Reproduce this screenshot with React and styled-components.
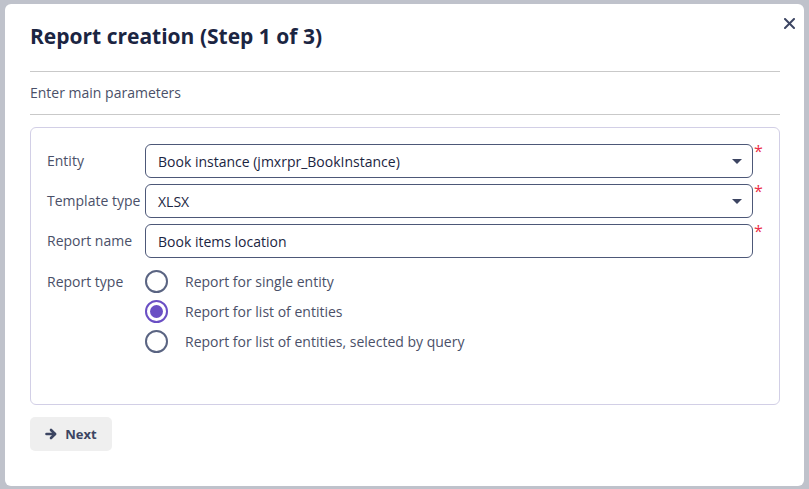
import React from 'react';
import styled, { createGlobalStyle } from 'styled-components';

const GlobalStyle = createGlobalStyle`
  html, body {
    margin: 0;
    height: 100%;
  }
  body {
    background: #bfc2cb;
    font-family: "Open Sans", "Noto Sans", sans-serif;
    padding: 4px 5px 3px 5px;
    box-sizing: border-box;
  }
  #root {
    height: 100%;
  }
`;

const Dialog = styled.div`
  position: relative;
  box-sizing: border-box;
  height: 100%;
  background: #fff;
  border-radius: 6px;
  padding: 17px 24px 0 25px;
  display: flex;
  flex-direction: column;
`;

const CloseButton = styled.button`
  position: absolute;
  top: 10px;
  right: 6px;
  width: 18px;
  height: 18px;
  border: none;
  background: none;
  padding: 0;
  display: flex;
  align-items: center;
  justify-content: center;
  color: #3c4562;
  cursor: pointer;
`;

const Title = styled.h1`
  margin: 0;
  font-size: 21px;
  line-height: 30px;
  font-weight: 700;
  color: #1b2542;
  padding-bottom: 20px;
  border-bottom: 1px solid #c9c9c9;
`;

const Subtitle = styled.div`
  font-size: 14px;
  line-height: 20px;
  color: #4a5068;
  padding: 11px 0 11px;
  border-bottom: 1px solid #c9c9c9;
`;

const Panel = styled.div`
  margin-top: 12px;
  height: 278px;
  box-sizing: border-box;
  border: 1px solid #d2cfe6;
  border-radius: 6px;
  padding: 16px 0 0 16px;
  display: flex;
  flex-direction: column;
  gap: 6px;
`;

const Row = styled.div`
  display: grid;
  grid-template-columns: 98px 608px 20px;
  align-items: ${(p) => (p.$top ? 'start' : 'center')};
  margin-top: ${(p) => (p.$top ? '8px' : '0')};
`;

const Label = styled.div`
  font-size: 14px;
  line-height: 20px;
  color: #4a5068;
`;

const Field = styled.div`
  box-sizing: border-box;
  height: 34px;
  border: 1px solid #4d5878;
  border-radius: 6px;
  padding: 0 12px;
  display: flex;
  align-items: center;
  justify-content: space-between;
  font-size: 14px;
  color: #1b2542;
`;

const Caret = styled.span`
  width: 0;
  height: 0;
  border-left: 5px solid transparent;
  border-right: 5px solid transparent;
  border-top: 5px solid #3c4562;
  margin-right: -2px;
`;

const Required = styled.span`
  align-self: start;
  color: #ec2d45;
  font-size: 16px;
  line-height: 16px;
  padding-left: 1px;
  margin-top: -1px;
`;

const RadioList = styled.div`
  display: flex;
  flex-direction: column;
  gap: 7px;
  margin-top: -2px;
`;

const RadioItem = styled.label`
  display: flex;
  align-items: center;
  gap: 17px;
  font-size: 14px;
  color: #4a5068;
`;

const RadioCircle = styled.span`
  box-sizing: border-box;
  width: 23px;
  height: 23px;
  border-radius: 50%;
  border: 2px solid ${(p) => (p.$checked ? '#6a4fc4' : '#5a6482')};
  display: flex;
  align-items: center;
  justify-content: center;
  &::after {
    content: '';
    display: ${(p) => (p.$checked ? 'block' : 'none')};
    width: 13px;
    height: 13px;
    border-radius: 50%;
    background: #6a4fc4;
  }
`;

const Footer = styled.div`
  padding-top: 12px;
`;

const NextButton = styled.button`
  box-sizing: border-box;
  width: 82px;
  height: 34px;
  border: none;
  border-radius: 5px;
  background: #efefef;
  display: flex;
  align-items: center;
  justify-content: center;
  gap: 8px;
  font-family: inherit;
  font-size: 13px;
  font-weight: 700;
  color: #3c4562;
  cursor: pointer;
`;

const radios = [
  { label: 'Report for single entity', checked: false },
  { label: 'Report for list of entities', checked: true },
  { label: 'Report for list of entities, selected by query', checked: false },
];

export default function App() {
  return (
    <>
      <GlobalStyle />
      <Dialog>
        <CloseButton aria-label="Close">
          <svg width="11" height="11" viewBox="0 0 11 11" fill="none" stroke="currentColor" strokeWidth="2" strokeLinecap="round">
            <line x1="1" y1="1" x2="10" y2="10" />
            <line x1="10" y1="1" x2="1" y2="10" />
          </svg>
        </CloseButton>
        <Title>Report creation (Step 1 of 3)</Title>
        <Subtitle>Enter main parameters</Subtitle>
        <Panel>
          <Row>
            <Label>Entity</Label>
            <Field>
              Book instance (jmxrpr_BookInstance)
              <Caret />
            </Field>
            <Required>*</Required>
          </Row>
          <Row>
            <Label>Template type</Label>
            <Field>
              XLSX
              <Caret />
            </Field>
            <Required>*</Required>
          </Row>
          <Row>
            <Label>Report name</Label>
            <Field>Book items location</Field>
            <Required>*</Required>
          </Row>
          <Row $top>
            <Label>Report type</Label>
            <RadioList>
              {radios.map((r) => (
                <RadioItem key={r.label}>
                  <RadioCircle $checked={r.checked} />
                  {r.label}
                </RadioItem>
              ))}
            </RadioList>
          </Row>
        </Panel>
        <Footer>
          <NextButton>
            <svg width="12" height="12" viewBox="0 0 12 12" fill="none" stroke="currentColor" strokeWidth="2.6" strokeLinecap="round" strokeLinejoin="round">
              <line x1="1.5" y1="6" x2="10" y2="6" />
              <polyline points="6,2 10,6 6,10" />
            </svg>
            Next
          </NextButton>
        </Footer>
      </Dialog>
    </>
  );
}
